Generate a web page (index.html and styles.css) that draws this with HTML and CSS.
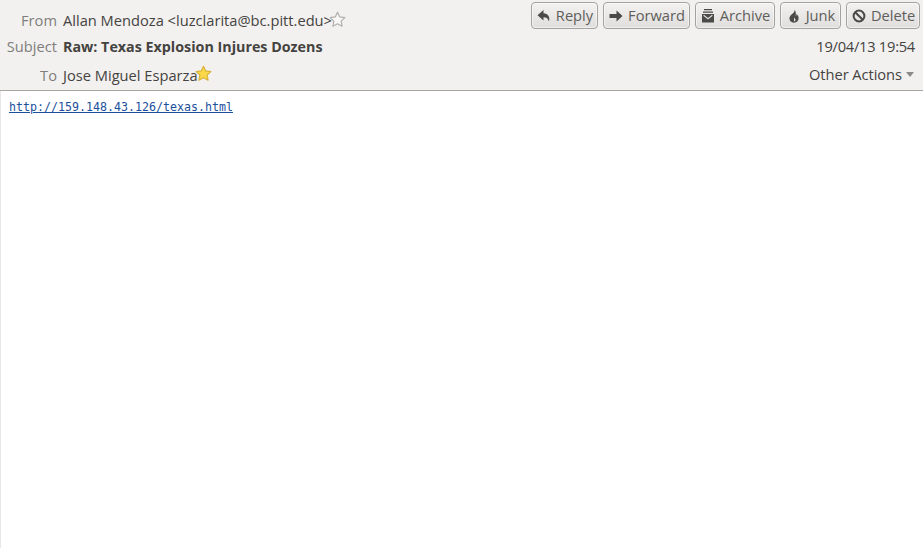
FILE: index.html
```html
<!DOCTYPE html>
<html lang="en">
<head>
<meta charset="utf-8">
<title>Raw: Texas Explosion Injures Dozens</title>
<link rel="stylesheet" href="styles.css">
</head>
<body>
<header class="header">
  <div class="fields">
    <div class="row row-from">
      <span class="label">From</span>
      <span class="value">Allan Mendoza &lt;luzclarita@bc.pitt.edu&gt;</span>
      <svg class="star" width="17" height="17" viewBox="0 0 16 16"><path d="M8 1.200l2.100 4.400 4.800.6-3.500 3.300.9 4.800L8 12l-4.300 2.300.9-4.800L1.100 6.200l4.800-.6z" fill="#f8f7f5" stroke="#b0aeaa" stroke-width="1.100" stroke-linejoin="round"/></svg>
    </div>
    <div class="row row-subject">
      <span class="label">Subject</span>
      <span class="value subject">Raw: Texas Explosion Injures Dozens</span>
    </div>
    <div class="row row-to">
      <span class="label">To</span>
      <span class="value">Jose Miguel Esparza</span>
      <svg class="star" width="17" height="17" viewBox="0 0 16 16"><path d="M8 1.200l2.100 4.400 4.800.6-3.500 3.300.9 4.800L8 12l-4.300 2.300.9-4.800L1.100 6.200l4.800-.6z" fill="#fbd848" stroke="#d8b23a" stroke-width="1.100" stroke-linejoin="round"/></svg>
    </div>
  </div>
  <div class="side">
    <div class="buttons">
      <button class="btn btn-reply">
        <svg width="14" height="14" viewBox="0 0 14 14"><path d="M6.500 1L0.500 6.200 6.500 11.500V8.300c2.700 0 4.500.9 5.500 4.200C13.300 7.800 11 4.300 6.500 4.200z" fill="#4a4a46"/></svg>
        Reply
      </button>
      <button class="btn btn-forward">
        <svg width="14" height="14" viewBox="0 0 14 14"><path d="M0.500 5h7V1.500L13.500 7l-6 5.500V9h-7z" fill="#4a4a46"/></svg>
        Forward
      </button>
      <button class="btn btn-archive">
        <svg width="14" height="14" viewBox="0 0 14 14"><path d="M3 0h8v1.300H3zM2 2.400h10v1.300H2zM1 5h12v8.500H1z" fill="#4a4a46"/><path d="M2.600 6.200L7 9.800l4.400-3.600" fill="none" stroke="#dcdbd9" stroke-width="1.200"/></svg>
        Archive
      </button>
      <button class="btn btn-junk">
        <svg width="14" height="14" viewBox="0 0 14 14"><path d="M7.500 .5c.4 2-.5 2.900-1.800 4C4 5.900 2.400 7.300 2.400 9.300c0 2.700 2 4.400 4.600 4.400s4.600-1.700 4.600-4.400c0-2-1-3.400-2-4.500 0 1.100-.2 1.900-.9 2.400C9.200 5 8.900 2.300 7.500.5zM7 8.500c.7.900 1.500 1.500 1.500 2.500 0 .9-.7 1.400-1.500 1.400z" fill="#4a4a46" fill-rule="evenodd"/></svg>
        Junk
      </button>
      <button class="btn btn-delete">
        <svg width="14" height="14" viewBox="0 0 14 14"><circle cx="7" cy="7" r="5.400" fill="none" stroke="#4a4a46" stroke-width="2"/><path d="M3.200 3.200l7.600 7.600" stroke="#4a4a46" stroke-width="2"/></svg>
        Delete
      </button>
    </div>
    <div class="date">19/04/13 19:54</div>
    <div class="actions">Other Actions <span class="caret"></span></div>
  </div>
</header>
<main class="body">
  <a class="link" href="#">http://159.148.43.126/texas.html</a>
</main>
</body>
</html>
```

FILE: styles.css
```css
html, body {
  margin: 0;
  height: 100%;
  background: #fff;
}
body {
  font-family: "Open Sans", "Noto Sans", sans-serif;
  font-size: 14.67px;
  color: #454340;
  overflow: hidden;
}
.header {
  box-sizing: border-box;
  height: 91px;
  display: flex;
  justify-content: space-between;
  background: #f2f1f0;
  border-bottom: 1px solid #a8a6a3;
}
.fields {
  display: flex;
  flex-direction: column;
  padding-top: 7px;
}
.row {
  display: flex;
  align-items: center;
  white-space: nowrap;
}
.row-from { height: 26px; }
.row-subject { height: 26px; }
.row-to { height: 31px; }
.label {
  width: 57px;
  margin-right: 6px;
  text-align: right;
  color: #807e7b;
}
.subject {
  font-weight: 700;
  font-size: 14.3px;
}
.star { flex: none; margin-left: -3px; margin-top: -2px; }
.side {
  display: flex;
  flex-direction: column;
  align-items: flex-end;
  padding: 2px 3px 0 0;
}
.buttons {
  display: flex;
  gap: 5px;
}
.btn {
  box-sizing: border-box;
  height: 27px;
  padding: 0 0 2px 1px;
  display: flex;
  align-items: center;
  justify-content: center;
  gap: 5px;
  font: inherit;
  color: #605e5b;
  border: 1px solid #a5a3a0;
  border-radius: 4px;
  background: linear-gradient(#f3f2f1, #dfdedc);
  box-shadow: inset 0 0 0 1px rgba(255,255,255,.5);
}
.btn svg { flex: none; margin-top: 2px; }
.btn-reply { width: 67px; }
.btn-forward { width: 87px; }
.btn-archive { width: 80px; }
.btn-junk { width: 61px; }
.btn-delete { width: 74px; }
.date {
  margin-top: 8px;
  height: 19px;
  line-height: 19px;
  padding-right: 5px;
  letter-spacing: -0.25px;
}
.actions {
  margin-top: 9px;
  height: 19px;
  line-height: 19px;
  padding-right: 6px;
  display: flex;
  align-items: center;
  gap: 4px;
  letter-spacing: -0.05px;
}
.caret {
  width: 0;
  height: 0;
  border-left: 4px solid transparent;
  border-right: 4px solid transparent;
  border-top: 5px solid #8c8a87;
}
.body {
  box-sizing: border-box;
  height: calc(100% - 91px);
  padding: 8px 8px;
  border-left: 1px solid #e8e8e8;
}
.link {
  display: block;
  font-family: "DejaVu Sans Mono", "Liberation Mono", monospace;
  font-size: 11.63px;
  line-height: 16px;
  color: #1c4f9c;
}
```
